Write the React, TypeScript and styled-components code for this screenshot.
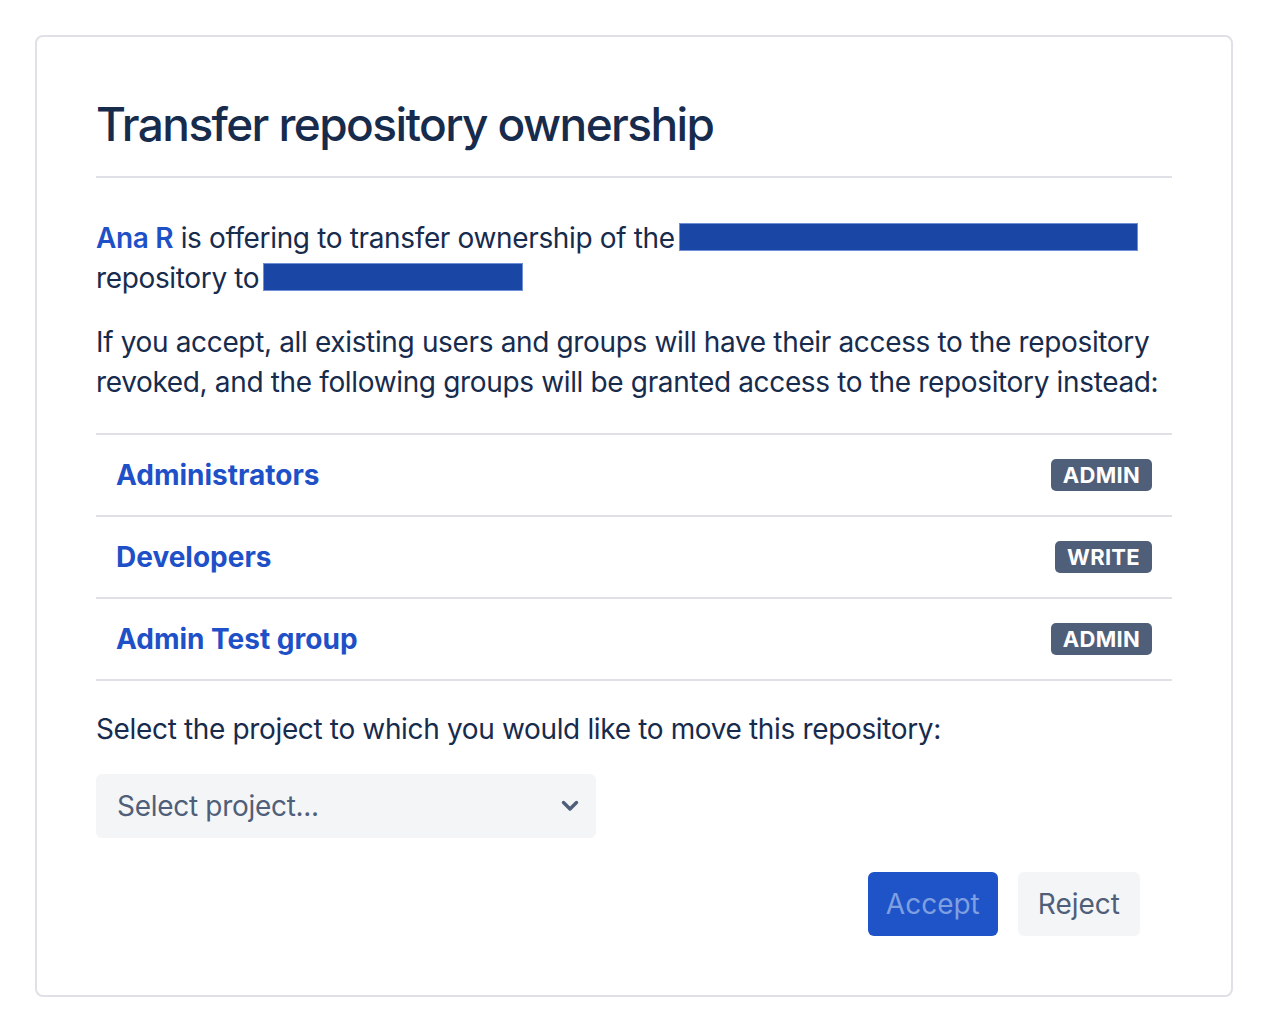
import styled, { createGlobalStyle } from "styled-components"

const GlobalStyle = createGlobalStyle`
  html, body {
    margin: 0;
    padding: 0;
    background: #ffffff;
  }
  body {
    font-family: Inter, "Noto Sans", "Liberation Sans", sans-serif;
    color: #172b4d;
  }
`

const Card = styled("section")`
  box-sizing: border-box;
  width: 1198px;
  height: 962px;
  margin: 35px 0 0 35px;
  border: 2px solid #dfe1e6;
  border-radius: 8px;
  padding: 59px 59px 0;
`

const Header = styled("header")`
  padding-bottom: 24px;
  border-bottom: 2px solid #dfe1e6;
`

const Title = styled("h1")`
  margin: 0;
  font-size: 46px;
  line-height: 56px;
  font-weight: 500;
  letter-spacing: -1.6px;
  color: #172b4d;
`

const Text = styled("p")<{ $top: number }>`
  margin: ${p => p.$top}px 0 0;
  font-size: 28px;
  line-height: 40px;
  letter-spacing: -0.35px;
`

const UserLink = styled("a")`
  color: #1e50c8;
  font-weight: 600;
  text-decoration: none;
`

const Redacted = styled("span")<{ $width: number }>`
  display: inline-block;
  box-sizing: border-box;
  width: ${p => p.$width}px;
  height: 28px;
  margin-left: 4px;
  vertical-align: -3px;
  background: #1a46a6;
  border: 1px solid #6f8fd6;
`

const GroupList = styled("ul")`
  list-style: none;
  margin: 31px 0 0;
  padding: 0;
  border-bottom: 2px solid #dfe1e6;
`

const GroupRow = styled("li")`
  display: flex;
  align-items: center;
  justify-content: space-between;
  height: 80px;
  padding: 0 20px;
  border-top: 2px solid #dfe1e6;
`

const GroupName = styled("a")`
  color: #1e50c8;
  font-size: 28px;
  font-weight: 700;
  letter-spacing: 0;
  text-decoration: none;
`

const Badge = styled("span")`
  display: inline-flex;
  align-items: center;
  height: 32px;
  padding: 0 12px;
  border-radius: 5px;
  background: #505f79;
  color: #ffffff;
  font-size: 22px;
  font-weight: 700;
  letter-spacing: 0.3px;
`

const SelectBox = styled("div")`
  display: flex;
  align-items: center;
  justify-content: space-between;
  box-sizing: border-box;
  width: 500px;
  height: 64px;
  margin-top: 25px;
  padding: 0 16px 0 21px;
  border-radius: 6px;
  background: #f4f5f7;
  color: #505f79;
  font-size: 28px;
  letter-spacing: -0.3px;
`

const Actions = styled("div")`
  display: flex;
  justify-content: flex-end;
  gap: 20px;
  margin-top: 34px;
  padding-right: 32px;
`

const Button = styled("button")<{ $primary?: boolean }>`
  height: 64px;
  padding: 0 ${p => (p.$primary ? 18 : 20)}px;
  border: none;
  border-radius: 6px;
  font-family: inherit;
  font-size: 28px;
  letter-spacing: 0;
  background: ${p => (p.$primary ? "#1e54c8" : "#f4f5f7")};
  color: ${p => (p.$primary ? "#7f9fe0" : "#505f79")};
`

const groups = [
  { name: "Administrators", role: "ADMIN" },
  { name: "Developers", role: "WRITE" },
  { name: "Admin Test group", role: "ADMIN" },
]

const Chevron = () => (
  <svg width="20" height="14" viewBox="0 0 20 14">
    <path
      d="M3.5 3.5 L10 10 L16.5 3.5"
      fill="none"
      stroke="#505f79"
      strokeWidth="3.4"
      strokeLinecap="round"
      strokeLinejoin="round"
    />
  </svg>
)

export default function App() {
  return (
    <>
      <GlobalStyle />
      <Card>
        <Header>
          <Title>Transfer repository ownership</Title>
        </Header>

        <Text $top={40}>
          <UserLink href="#">Ana R</UserLink> is offering to transfer ownership of the
          <Redacted $width={459} />
          <br />
          repository to
          <Redacted $width={260} />
        </Text>

        <Text $top={24}>
          If you accept, all existing users and groups will have their access to the
          repository revoked, and the following groups will be granted access to the
          repository instead:
        </Text>

        <GroupList>
          {groups.map(g => (
            <GroupRow key={g.name}>
              <GroupName href="#">{g.name}</GroupName>
              <Badge>{g.role}</Badge>
            </GroupRow>
          ))}
        </GroupList>

        <Text $top={28}>Select the project to which you would like to move this repository:</Text>

        <SelectBox>
          <span>Select project...</span>
          <Chevron />
        </SelectBox>

        <Actions>
          <Button $primary disabled>
            Accept
          </Button>
          <Button>Reject</Button>
        </Actions>
      </Card>
    </>
  )
}
